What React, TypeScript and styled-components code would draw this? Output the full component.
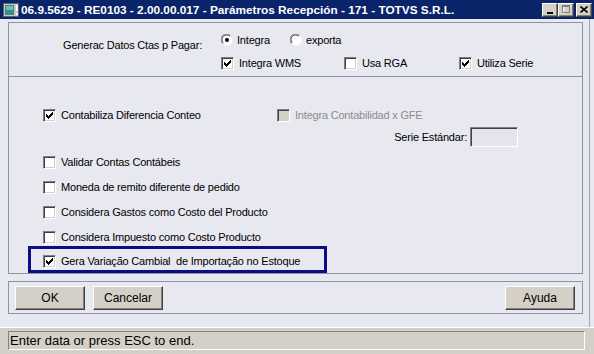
import React from 'react';
import styled, { createGlobalStyle } from 'styled-components';

const UI_FONT = `"Liberation Sans", Arial, sans-serif`;

const Global = createGlobalStyle`
  html, body { margin: 0; padding: 0; background: #e8e8f0; }
  body { font-family: ${UI_FONT}; font-size: 11px; color: #000; letter-spacing: -0.2px; }
  * { box-sizing: border-box; }
`;

const Window = styled.div`
  width: 594px;
  height: 354px;
  display: flex;
  flex-direction: column;
  background: #e8e8f0;
  overflow: hidden;
`;

const TitleBar = styled.div`
  height: 19px;
  flex: none;
  background: #0a246a;
  display: flex;
  align-items: center;
  padding: 0 2px 0 3px;
  color: #fff;
  font-weight: bold;
  font-size: 11.8px;
  letter-spacing: 0;
`;

const TitleText = styled.span`
  margin-left: 2px;
  flex: 1;
  white-space: nowrap;
`;

const CaptionButtons = styled.div`
  display: flex;
  align-items: center;
`;

const CaptionButton = styled.div<{ $gap?: number }>`
  width: 16px;
  height: 14px;
  margin-left: ${(p) => p.$gap ?? 0}px;
  background: #d4d0c8;
  border: 1px solid;
  border-color: #ffffff #404040 #404040 #ffffff;
  box-shadow: inset -1px -1px #808080;
  display: flex;
  align-items: center;
  justify-content: center;
`;

const Content = styled.div`
  flex: 1;
  display: flex;
  flex-direction: column;
  padding: 3px 6px 0 8px;
  margin-right: 4px;
  border-right: 1px solid #a4a8b2;
`;

const TopPanel = styled.div`
  height: 55px;
  border: 1px solid #8c94a6;
  display: grid;
  grid-template-columns: 193px 1fr;
  column-gap: 19px;
  padding-top: 10px;
`;

const FieldLabel = styled.div`
  text-align: right;
  padding-top: 5px;
  line-height: 14px;
  white-space: nowrap;
`;

const OptionGroup = styled.div`
  display: flex;
  flex-direction: column;
  gap: 9px;
`;

const OptionRow = styled.div`
  display: flex;
  height: 14px;
  align-items: center;
`;

const Slot = styled.div<{ $w?: number }>`
  width: ${(p) => (p.$w ? `${p.$w}px` : 'auto')};
  flex: none;
  display: flex;
  align-items: center;
`;

const MainPanel = styled.div`
  height: 197px;
  border: 1px solid #8c94a6;
  border-top: none;
  display: flex;
  flex-direction: column;
  padding-top: 32px;
`;

const Row = styled.div<{ $h: number; $mt?: number; $end?: boolean }>`
  height: ${(p) => p.$h}px;
  margin-top: ${(p) => p.$mt ?? 0}px;
  display: flex;
  align-items: ${(p) => (p.$end ? 'center' : 'flex-start')};
  justify-content: ${(p) => (p.$end ? 'flex-end' : 'flex-start')};
  padding-left: ${(p) => (p.$end ? 0 : 34)}px;
  padding-right: ${(p) => (p.$end ? 64 : 0)}px;
  padding-top: ${(p) => (p.$h === 25 || p.$h === 21 ? 6 : 0)}px;
  gap: 3px;
`;

const Highlight = styled.div`
  margin-left: 19px;
  width: 299px;
  height: 27px;
  border: 3px solid #0c0c84;
  display: flex;
  align-items: flex-start;
  padding: 6px 0 0 12px;
`;

const TextInput = styled.div`
  width: 48px;
  height: 20px;
  background: #e4e4ec;
  border: 1px solid;
  border-color: #808080 #ffffff #ffffff #808080;
  box-shadow: inset 1px 1px #404040;
`;

const ButtonPanel = styled.div`
  margin-top: 7px;
  height: 33px;
  border: 1px solid #8c94a6;
  display: flex;
  align-items: flex-start;
  padding: 4px 7px 0 6px;
  gap: 8px;
`;

const PushButton = styled.div<{ $push?: boolean }>`
  width: 70px;
  height: 24px;
  margin-left: ${(p) => (p.$push ? 'auto' : '0')};
  background: #d4d0c8;
  border: 1px solid;
  border-color: #ffffff #404040 #404040 #ffffff;
  box-shadow: inset -1px -1px #808080;
  display: flex;
  align-items: center;
  justify-content: center;
  font-size: 12px;
  letter-spacing: 0;
  padding-bottom: 1px;
`;

const StatusArea = styled.div`
  height: 27px;
  flex: none;
  background: #d4d0c8;
  border-top: 1px solid #ffffff;
  padding: 3px 9px 0 8px;
`;

const StatusField = styled.div`
  height: 19px;
  border: 1px solid;
  border-color: #808080 #ffffff #ffffff #808080;
  display: flex;
  align-items: center;
  padding-left: 1px;
  font-size: 13px;
  letter-spacing: 0;
  white-space: nowrap;
`;

const OptLabel = styled.span<{ $disabled?: boolean; $gap?: number }>`
  margin-left: ${(p) => p.$gap ?? 5}px;
  white-space: pre;
  line-height: 13px;
  color: ${(p) => (p.$disabled ? '#8c8c8c' : '#000')};
`;

const Box = styled.span<{ $disabled?: boolean }>`
  width: 13px;
  height: 13px;
  flex: none;
  background: ${(p) => (p.$disabled ? '#d4d0c8' : '#ffffff')};
  border: 1px solid;
  border-color: #808080 #ffffff #ffffff #808080;
  box-shadow: inset 1px 1px #404040, inset -1px -1px #d4d0c8;
  display: flex;
  align-items: center;
  justify-content: center;
`;

const Item = styled.span`
  display: inline-flex;
  align-items: center;
  height: 13px;
`;

const Check: React.FC<{ checked?: boolean; disabled?: boolean; label: string }> = ({ checked, disabled, label }) => (
  <Item>
    <Box $disabled={disabled}>
      {checked && (
        <svg width="7" height="7" viewBox="0 0 7 7" shapeRendering="crispEdges">
          <path d="M6 0h1v3h-1zM5 1h1v3h-1zM4 2h1v3h-1zM3 3h1v3h-1zM2 4h1v3h-1zM1 3h1v3h-1zM0 2h1v3h-1z" fill="#000" />
        </svg>
      )}
    </Box>
    <OptLabel $disabled={disabled}>{label}</OptLabel>
  </Item>
);

const Radio: React.FC<{ checked?: boolean; label: string }> = ({ checked, label }) => (
  <Item>
    <svg width="12" height="12" viewBox="0 0 12 12">
      <circle cx="6" cy="6" r="5.5" fill="#ffffff" />
      <path d="M1.5 9.5 A5.5 5.5 0 0 1 9.5 1.5" stroke="#808080" strokeWidth="1" fill="none" />
      <path d="M2.3 8.8 A4.5 4.5 0 0 1 8.8 2.3" stroke="#404040" strokeWidth="1" fill="none" />
      {checked && <circle cx="6" cy="6" r="2" fill="#000" />}
    </svg>
    <OptLabel $gap={4}>{label}</OptLabel>
  </Item>
);

const AppIcon = () => (
  <svg width="16" height="14" viewBox="0 0 16 14">
    <rect x="0.5" y="0.5" width="15" height="13" fill="#c8c8c8" stroke="#606060" />
    <rect x="2" y="2" width="9" height="10" fill="#3c8c8c" />
    <rect x="3" y="3" width="7" height="4" fill="#6cc0b0" />
    <rect x="13" y="2" width="1.5" height="6" fill="#ffffff" />
    <rect x="13" y="10" width="1.5" height="2" fill="#ffffff" />
  </svg>
);

export default function App() {
  return (
    <>
      <Global />
      <Window>
        <TitleBar>
          <AppIcon />
          <TitleText>06.9.5629 - RE0103 - 2.00.00.017 - Parámetros Recepción - 171 - TOTVS S.R.L.</TitleText>
          <CaptionButtons>
            <CaptionButton>
              <svg width="8" height="8" viewBox="0 0 8 8">
                <rect x="1" y="6" width="6" height="2" fill="#000" />
              </svg>
            </CaptionButton>
            <CaptionButton>
              <svg width="9" height="9" viewBox="0 0 9 9" shapeRendering="crispEdges">
                <rect x="1" y="1" width="8" height="8" fill="none" stroke="#ffffff" />
                <rect x="0.5" y="0.5" width="7" height="7" fill="none" stroke="#808080" />
                <rect x="0.5" y="1" width="7" height="1" fill="#808080" />
              </svg>
            </CaptionButton>
            <CaptionButton $gap={2}>
              <svg width="8" height="7" viewBox="0 0 8 7">
                <path d="M0.5 0.5 L7.5 6.5 M7.5 0.5 L0.5 6.5" stroke="#000" strokeWidth="1.6" />
              </svg>
            </CaptionButton>
          </CaptionButtons>
        </TitleBar>
        <Content>
          <TopPanel>
            <FieldLabel>Generac Datos Ctas p Pagar:</FieldLabel>
            <OptionGroup>
              <OptionRow>
                <Slot $w={69}>
                  <Radio checked label="Integra" />
                </Slot>
                <Slot>
                  <Radio label="exporta" />
                </Slot>
              </OptionRow>
              <OptionRow>
                <Slot $w={123}>
                  <Check checked label="Integra WMS" />
                </Slot>
                <Slot $w={115}>
                  <Check label="Usa RGA" />
                </Slot>
                <Slot>
                  <Check checked label="Utiliza Serie" />
                </Slot>
              </OptionRow>
            </OptionGroup>
          </TopPanel>
          <MainPanel>
            <Row $h={13}>
              <Slot $w={231}>
                <Check checked label="Contabiliza Diferencia Conteo" />
              </Slot>
              <Slot>
                <Check disabled label="Integra Contabilidad x GFE" />
              </Slot>
            </Row>
            <Row $h={20} $mt={5} $end>
              <span>Serie Estándar:</span>
              <TextInput />
            </Row>
            <Row $h={25} $mt={3}>
              <Check label="Validar Contas Contábeis" />
            </Row>
            <Row $h={25}>
              <Check label="Moneda de remito diferente de pedido" />
            </Row>
            <Row $h={25}>
              <Check label="Considera Gastos como Costo del Producto" />
            </Row>
            <Row $h={21}>
              <Check label="Considera Impuesto como Costo Producto" />
            </Row>
            <Highlight>
              <Check checked label="Gera Variação Cambial  de Importação no Estoque" />
            </Highlight>
          </MainPanel>
          <ButtonPanel>
            <PushButton>OK</PushButton>
            <PushButton>Cancelar</PushButton>
            <PushButton $push>Ayuda</PushButton>
          </ButtonPanel>
        </Content>
        <StatusArea>
          <StatusField>Enter data or press ESC to end.</StatusField>
        </StatusArea>
      </Window>
    </>
  );
}
